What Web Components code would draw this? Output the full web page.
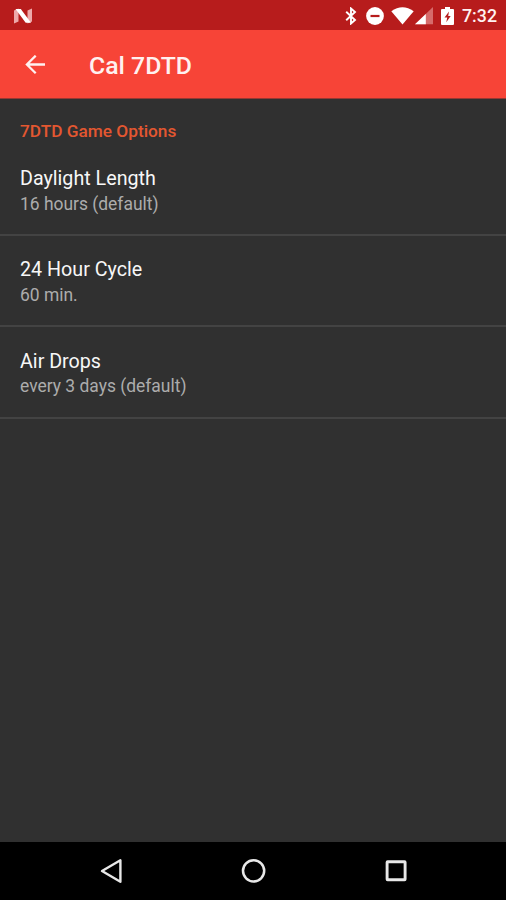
<!DOCTYPE html>
<html lang="en">
<head>
<meta charset="utf-8">
<title>Cal 7DTD</title>
<style>
html,body{margin:0;height:100%;background:#303030}
body{font-family:Roboto,"Liberation Sans",sans-serif;overflow:hidden}
</style>
</head>
<body>
<settings-screen></settings-screen>
<script>
function define(name, markup) {
  const template = document.createElement('template');
  template.innerHTML = markup;
  customElements.define(name, class extends HTMLElement {
    constructor() {
      super();
      this.attachShadow({ mode: 'open' }).append(template.content.cloneNode(true));
    }
  });
}

define('status-bar', `
<style>
:host{display:flex;align-items:center;height:30px;background:#b71c1c;color:#fff;box-sizing:border-box;padding:1px 8px 0 13px}
svg{display:block;flex:none}
.space{flex:1}
.bt{margin-right:9px}.dnd{margin-right:7px}.wifi{margin-right:1px}.cell{margin-right:8px}.bat{margin-right:8px}
.time{font-size:17.8px;font-weight:500;line-height:29px;width:36px;white-space:nowrap;color:#fff1f1}
</style>
<svg width="20" height="16" viewBox="0 0 20 16"><path d="M1 2.5 5.5.5v13L1 15.5zM14.5 2.5 19 .5v13L14.5 15.5z" fill="#eda9aa"/><path d="M2.5 1h5.3L18 14.8h-5.3z" fill="#fff"/></svg>
<span class="space"></span>
<svg class="bt" width="12" height="18" viewBox="0 0 12 18"><path d="M1.2 4.8 10 13 6 16.5v-15l4 3.5-8.8 8.2" fill="none" stroke="#fff" stroke-width="1.9"/></svg>
<svg class="dnd" width="18" height="18" viewBox="0 0 18 18"><circle cx="9" cy="9" r="8.9" fill="#fff"/><path d="M4.5 9h9" stroke="#b71c1c" stroke-width="2.2"/></svg>
<svg class="wifi" width="23" height="18" viewBox="0 0 23 18"><path d="M.3 4.2Q11.5-3.5 22.7 4.2L11.5 17.5z" fill="#fff"/></svg>
<svg class="cell" width="18" height="18" viewBox="0 0 18 18"><path d="M0 17.2 18 0v17.2z" fill="#d66b6b"/><path d="M0 17.2 10.8 6.9v10.3z" fill="#fff"/></svg>
<svg class="bat" width="13" height="18" viewBox="0 0 13 18"><path d="M4 0h5v2h3q1 0 1 1v14q0 1-1 1H1q-1 0-1-1V3q0-1 1-1h3z" fill="#fff"/><path d="M8 4.5 3.5 10.5h2.7l-.9 4.8L9.7 9H7.2z" fill="#b71c1c"/></svg>
<span class="time"><slot></slot></span>`);

define('app-bar', `
<style>
:host{display:flex;align-items:center;height:69px;box-sizing:border-box;padding:1px 25px 0;background:#f74437;border-bottom:1px solid #963832;color:#fff1f0}
svg{display:block;flex:none;margin-right:44px}
h1{margin:2px 0 0;font-size:24.8px;font-weight:500;line-height:30px;white-space:nowrap}
</style>
<svg width="20" height="20" viewBox="0 0 20 20"><path d="M20 9.5H2M10.7.7 1.9 9.5l8.8 8.8" fill="none" stroke="#fff1f0" stroke-width="2.3"/></svg>
<h1><slot></slot></h1>`);

define('option-group', `
<style>
:host{display:block;padding-top:20px}
h2{margin:0;padding-left:20px;font-size:17.25px;font-weight:500;line-height:24px;color:#e35730}
</style>
<h2><slot name="heading"></slot></h2><slot></slot>`);

define('option-row', `
<style>
:host{display:block;height:91px;box-sizing:border-box;padding:21px 20px 0;border-bottom:2px solid #434343}
:host(:first-of-type){height:93px;padding-top:23px}
:host(:last-of-type){height:91.5px;padding-top:22px}
.label{font-size:19.7px;line-height:26px;height:26px;color:#f7f7f7}
.value{font-size:17.45px;line-height:24px;color:#acacac}
:host(:last-of-type) .label{height:25px}
</style>
<div class="label"><slot></slot></div><div class="value"><slot name="value"></slot></div>`);

define('nav-bar', `
<style>
:host{display:flex;align-items:center;justify-content:space-between;height:58px;box-sizing:border-box;padding:0 98px;background:#000}
svg{display:block}
</style>
<svg width="26" height="26" viewBox="0 0 26 26"><path d="M22.4 2.3v21.4L4 13z" fill="none" stroke="#e8e8e8" stroke-width="2.4" stroke-linejoin="round"/></svg>
<svg width="26" height="26" viewBox="0 0 26 26"><circle cx="12.6" cy="12.8" r="10.6" fill="none" stroke="#e8e8e8" stroke-width="2.5"/></svg>
<svg width="24" height="24" viewBox="0 0 24 24"><rect x="3.1" y="2.7" width="18" height="18" rx=".5" fill="none" stroke="#e8e8e8" stroke-width="2.9"/></svg>`);

define('settings-screen', `
<style>
:host{display:flex;flex-direction:column;width:100%;height:100vh;background:#303030}
main{flex:1}
</style>
<status-bar>7:32</status-bar>
<app-bar>Cal 7DTD</app-bar>
<main>
<option-group>
<span slot="heading">7DTD Game Options</span>
<option-row>Daylight Length<span slot="value">16 hours (default)</span></option-row>
<option-row>24 Hour Cycle<span slot="value">60 min.</span></option-row>
<option-row>Air Drops<span slot="value">every 3 days (default)</span></option-row>
</option-group>
</main>
<nav-bar></nav-bar>`);
</script>
</body>
</html>
